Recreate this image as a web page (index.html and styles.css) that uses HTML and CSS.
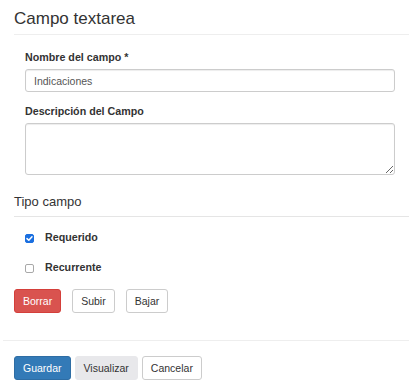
FILE: index.html
```html
<!DOCTYPE html>
<html lang="es">
<head>
<meta charset="utf-8">
<title>Campo textarea</title>
<link rel="stylesheet" href="styles.css">
</head>
<body>
<div class="form">
  <h3 class="title">Campo textarea</h3>
  <div class="fields">
    <div class="group first">
      <label class="lbl" for="nombre">Nombre del campo *</label>
      <input class="ctl" id="nombre" type="text" value="Indicaciones">
    </div>
    <div class="group">
      <label class="lbl" for="desc">Descripción del Campo</label>
      <textarea class="ctl area" id="desc"></textarea>
    </div>
  </div>
  <div class="legend">Tipo campo</div>
  <div class="checks">
    <label class="check"><span class="box on"><svg width="9" height="9" viewBox="0 0 9 9"><polyline points="2,4.6 3.8,6.3 7,2.7" fill="none" stroke="#fff" stroke-width="1.5" stroke-linecap="round" stroke-linejoin="round"/></svg></span>Requerido</label>
    <label class="check"><span class="box"></span>Recurrente</label>
  </div>
  <div class="row-btns">
    <button class="btn danger">Borrar</button>
    <button class="btn">Subir</button>
    <button class="btn">Bajar</button>
  </div>
</div>
<div class="footer">
  <div class="foot-btns">
    <button class="btn primary">Guardar</button>
    <button class="btn muted">Visualizar</button>
    <button class="btn">Cancelar</button>
  </div>
</div>
</body>
</html>
```
FILE: styles.css
```css
* { box-sizing: border-box; }
html, body { margin: 0; padding: 0; background: #fff; }
body {
  font-family: "Liberation Sans", Arial, sans-serif;
  color: #333;
  font-size: 10.7px;
  width: 409px;
}
.form { padding-left: 14px; }
.title {
  margin: 9px 0 0 0;
  font-size: 17px;
  font-weight: normal;
  line-height: 20px;
  padding-bottom: 5px;
  border-bottom: 1px solid #eee;
}
.fields { margin: 0 14px 0 11px; }
.group { margin-top: 12px; display: flex; flex-direction: column; }
.group.first { margin-top: 15px; }
.lbl {
  font-weight: bold;
  line-height: 15px;
  margin-bottom: 4px;
}
.ctl {
  width: 100%;
  height: 23px;
  border: 1px solid #ccc;
  border-radius: 3px;
  box-shadow: inset 0 1px 1px rgba(0,0,0,0.075);
  font-family: "Liberation Sans", Arial, sans-serif;
  font-size: 10.5px;
  color: #555;
  padding: 0 8px;
  margin: 0;
  outline: none;
  display: block;
}
.area { height: 52px; resize: vertical; padding: 4px 8px; }
.legend {
  margin-top: 18px;
  font-size: 13px;
  line-height: 18px;
  padding-bottom: 5px;
  border-bottom: 1px solid #e5e5e5;
}
.checks {
  margin-top: 13px;
  padding-left: 11px;
  display: flex;
  flex-direction: column;
  gap: 15px;
}
.check {
  display: flex;
  align-items: center;
  font-weight: bold;
  line-height: 15px;
}
.box {
  width: 9px;
  height: 9px;
  border: 1px solid #a8a8a8;
  border-radius: 2px;
  background: #fff;
  margin: 1px 11px 0 0;
  display: flex;
}
.box.on { background: #1a6fe0; border-color: #1a6fe0; }
.box svg { margin: -1px; }
.row-btns { margin-top: 14px; display: flex; gap: 11px; }
.btn {
  font-family: "Liberation Sans", Arial, sans-serif;
  font-size: 10.5px;
  line-height: 14px;
  padding: 4px 8px;
  border: 1px solid #ccc;
  border-radius: 3px;
  background: #fff;
  color: #333;
  margin: 0;
}
.btn.danger { background: #d9534f; border-color: #d43f3a; color: #fff; }
.btn.primary { background: #337ab7; border-color: #2e6da4; color: #fff; }
.btn.muted { background: #e8e8eb; border-color: #e8e8eb; }
.footer {
  margin: 27px 0 0 3px;
  border-top: 1px solid #eee;
  padding: 15px 0 0 11px;
}
.foot-btns { display: flex; gap: 4px; }
```
